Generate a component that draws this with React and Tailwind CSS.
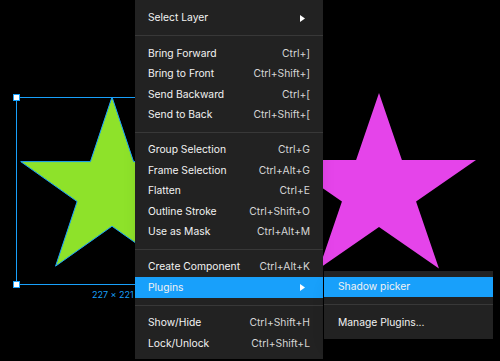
function starPoints(cx, cy, rx, ry, inner) {
  const pts = [];
  for (let i = 0; i < 10; i++) {
    const a = ((-90 + i * 36) * Math.PI) / 180;
    const k = i % 2 === 0 ? 1 : inner;
    pts.push(`${(cx + Math.cos(a) * rx * k).toFixed(2)},${(cy + Math.sin(a) * ry * k).toFixed(2)}`);
  }
  return pts.join(' ');
}

const mainItems = [
  { label: 'Select Layer', sub: true },
  'sep',
  { label: 'Bring Forward', key: 'Ctrl+]' },
  { label: 'Bring to Front', key: 'Ctrl+Shift+]' },
  { label: 'Send Backward', key: 'Ctrl+[' },
  { label: 'Send to Back', key: 'Ctrl+Shift+[' },
  'sep',
  { label: 'Group Selection', key: 'Ctrl+G' },
  { label: 'Frame Selection', key: 'Ctrl+Alt+G' },
  { label: 'Flatten', key: 'Ctrl+E' },
  { label: 'Outline Stroke', key: 'Ctrl+Shift+O' },
  { label: 'Use as Mask', key: 'Ctrl+Alt+M' },
  'sep',
  { label: 'Create Component', key: 'Ctrl+Alt+K' },
  { label: 'Plugins', sub: true, active: true },
  'sep',
  { label: 'Show/Hide', key: 'Ctrl+Shift+H' },
  { label: 'Lock/Unlock', key: 'Ctrl+Shift+L' },
];

function Arrow() {
  return (
    <svg width="5" height="7" viewBox="0 0 5 7" className="shrink-0">
      <path d="M0 0 L5 3.5 L0 7 Z" fill="#ffffff" />
    </svg>
  );
}

function Separator() {
  return <div className="h-px my-[7px] bg-[#383838]" />;
}

function MenuRow({ item }) {
  return (
    <div
      className={`h-[20.4px] flex items-center justify-between pl-[13px] ${item.sub ? 'pr-[18px]' : 'pr-[13px]'} ${item.active ? 'bg-[#18a0fb]' : ''}`}
    >
      <span className="text-[#f2f2f2]">{item.label}</span>
      {item.sub ? <Arrow /> : <span className="text-[#d6d6d6]">{item.key}</span>}
    </div>
  );
}

export default function App() {
  return (
    <div className="relative w-[500px] h-[361px] bg-black overflow-hidden font-['Inter',sans-serif] text-[10.3px]">
      {/* Canvas */}
      <svg width="500" height="361" className="absolute inset-0">
        <polygon points={starPoints(112, 190.5, 96, 93.5, 0.382)} fill="#8ee22a" stroke="#18a0fb" strokeWidth="1" />
        <polygon points={starPoints(379, 190, 102, 97, 0.382)} fill="#e544ea" />
        <rect x="16.5" y="97.5" width="192" height="187" fill="none" stroke="#18a0fb" strokeWidth="1" />
        <rect x="13.5" y="94.5" width="6" height="6" fill="#ffffff" stroke="#18a0fb" strokeWidth="1" />
        <rect x="13.5" y="281.5" width="6" height="6" fill="#ffffff" stroke="#18a0fb" strokeWidth="1" />
      </svg>
      <div className="absolute left-[92px] top-[289px] text-[9px] leading-[12px] text-[#18a0fb]">227 × 221</div>

      {/* Context menu */}
      <div className="absolute left-[135px] top-0 w-[188px] bg-[#222222] pt-[8px] pb-[6px] shadow-lg">
        {mainItems.map((item, i) => (item === 'sep' ? <Separator key={i} /> : <MenuRow key={i} item={item} />))}
      </div>

      {/* Plugins submenu */}
      <div className="absolute left-[324px] top-[271px] w-[169px] bg-[#222222] pt-[6px] pb-[6px] shadow-lg">
        <div className="h-[20.4px] flex items-center pl-[14px] bg-[#18a0fb] text-[#f2f2f2]">Shadow picker</div>
        <Separator />
        <div className="h-[20.4px] flex items-center pl-[14px] text-[#f2f2f2]">Manage Plugins...</div>
      </div>
    </div>
  );
}
